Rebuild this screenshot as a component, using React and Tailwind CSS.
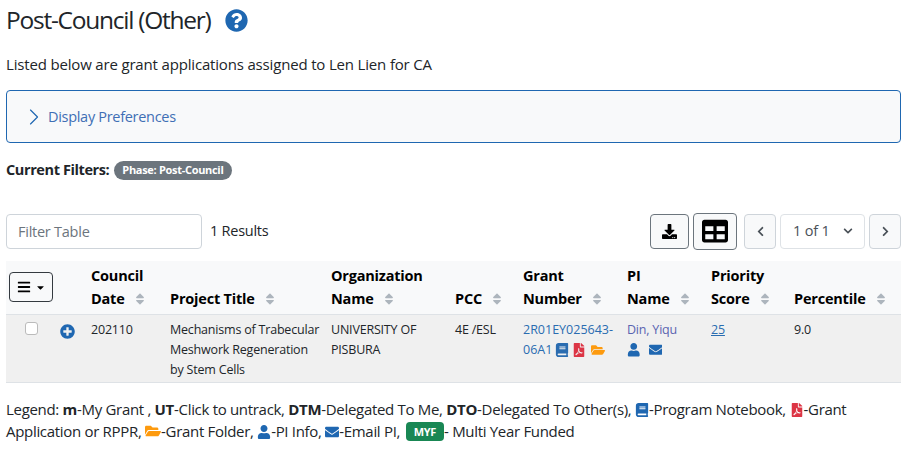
import React from 'react';
import { ChevronRight } from 'lucide-react';
import {
  FaQuestionCircle, FaPlusCircle, FaBook, FaFilePdf, FaFolderOpen, FaUser, FaEnvelope,
  FaSort, FaBars, FaCaretDown, FaChevronLeft, FaChevronRight, FaChevronDown, FaDownload, FaTable,
} from 'react-icons/fa';

function Head({ top, label, className = '' }) {
  return (
    <th className={`px-0 pt-[3px] pb-[4px] align-bottom text-left text-[14.5px] leading-[23px] font-bold text-black ${className}`}>
      {top && <div>{top}</div>}
      <div className="flex items-center">
        {label}
        <FaSort className="ml-[8px] text-[14px] text-[#adb5bd]" />
      </div>
    </th>
  );
}

export default function App() {
  return (
    <div className="min-h-screen bg-white px-[6px] font-['Open_Sans',sans-serif] text-[14.5px] text-[#212529]">
      <div className="flex h-[40px] items-center">
        <h1 className="text-[24.5px] leading-[40px] font-normal tracking-[-1.25px]">Post-Council (Other)</h1>
        <FaQuestionCircle className="ml-[14px] text-[23px] text-[#1f67b1]" />
      </div>

      <p className="mt-[13px] text-[15px] leading-[22px] tracking-[-0.17px]">Listed below are grant applications assigned to Len Lien for CA</p>

      <div className="mt-[15px] flex h-[53px] items-center rounded-[4px] border border-[#1f67b1] bg-[#f8f9fa] pl-[13px]">
        <ChevronRight className="h-[28px] w-[28px] text-[#1f67b1]" strokeWidth={1} />
        <span className="text-[14.5px] tracking-[-0.3px] text-[#3f6fb5]">Display Preferences</span>
      </div>

      <div className="mt-[17px] flex h-[20px] items-center">
        <span className="text-[14.5px] font-bold tracking-[-0.4px]">Current Filters:</span>
        <span className="ml-[5px] flex h-[19px] items-center rounded-full bg-[#6c757d] px-[8px] text-[11px] font-bold tracking-[-0.3px] text-white">Phase: Post-Council</span>
      </div>

      <div className="mt-[33px] flex h-[36px] items-center">
        <input
          placeholder="Filter Table"
          readOnly
          className="h-[35px] w-[196px] rounded-[4px] border border-[#ced4da] bg-white px-[11px] text-[14.5px] tracking-[-0.25px] placeholder:text-[#6c757d]"
        />
        <span className="ml-[8px] text-[14.5px] tracking-[-0.25px]">1 Results</span>
        <div className="ml-auto flex items-center">
          <button className="flex h-[35px] w-[39px] items-center justify-center rounded-[4px] border border-[#6c757d] bg-[#f8f9fa] text-[15px] text-black"><FaDownload /></button>
          <button className="ml-[4px] flex h-[37px] w-[44px] items-center justify-center rounded-[4px] border border-[#6c757d] bg-[#f8f9fa] text-[26px] text-black"><FaTable /></button>
          <button className="ml-[7px] flex h-[35px] w-[32px] items-center justify-center rounded-[4px] border border-[#ced4da] bg-[#f8f9fa] text-[11px] text-[#495057]"><FaChevronLeft /></button>
          <div className="ml-[4px] flex h-[35px] w-[85px] items-center rounded-[4px] border border-[#dee2e6] bg-white pl-[12px] tracking-[-0.2px] text-[#495057]">
            1 of 1
            <FaChevronDown className="ml-[13px] text-[10px]" />
          </div>
          <button className="ml-[4px] flex h-[35px] w-[32px] items-center justify-center rounded-[4px] border border-[#ced4da] bg-[#f8f9fa] text-[11px] text-[#495057]"><FaChevronRight /></button>
        </div>
      </div>

      <table className="mt-[12px] w-[895px] table-fixed border-collapse tracking-[-0.2px]">
        <colgroup>
          <col className="w-[85px]" />
          <col className="w-[79px]" />
          <col className="w-[161px]" />
          <col className="w-[124px]" />
          <col className="w-[68px]" />
          <col className="w-[104px]" />
          <col className="w-[84px]" />
          <col className="w-[83px]" />
          <col className="w-[107px]" />
        </colgroup>
        <thead>
          <tr className="h-[53px] border-b border-[#dee2e6] bg-[#f8f9fa]">
            <th className="px-0 pl-[3px] pt-[3px] align-top">
              <button className="mt-[8px] flex h-[30px] w-[44px] items-center justify-center gap-[4px] rounded-[4px] border border-[#343a40] text-[14px] text-black">
                <FaBars /><FaCaretDown className="text-[11px]" />
              </button>
            </th>
            <Head top="Council" label="Date" />
            <Head label="Project Title" />
            <Head top="Organization" label="Name" />
            <Head label="PCC" />
            <Head top="Grant" label="Number" />
            <Head top="PI" label="Name" />
            <Head top="Priority" label="Score" />
            <Head label="Percentile" />
          </tr>
        </thead>
        <tbody>
          <tr className="h-[68px] border-b border-[#dee2e6] bg-[#f0f0f0] align-top text-[12.5px] leading-[20px]">
            <td className="pt-[5px]">
              <div className="flex items-start">
                <span className="ml-[19px] mt-[2px] block h-[13px] w-[13px] rounded-[3px] border border-[#bbb] bg-white" />
                <FaPlusCircle className="ml-[22px] mt-[4px] text-[15px] text-[#1f67b1]" />
              </div>
            </td>
            <td className="pt-[5px]">202110</td>
            <td className="pt-[5px]">Mechanisms of Trabecular<br />Meshwork Regeneration<br />by Stem Cells</td>
            <td className="pt-[5px]">UNIVERSITY OF<br />PISBURA</td>
            <td className="pt-[5px]">4E /ESL</td>
            <td className="pt-[5px] tracking-[0px] text-[#2a6cb0]">
              2R01EY025643-<br />
              <span className="inline-flex items-center">
                06A1
                <FaBook className="ml-[3px] text-[14px] text-[#2a6cb0]" />
                <FaFilePdf className="ml-[3px] text-[14px] text-[#dc3545]" />
                <FaFolderOpen className="ml-[5px] text-[14px] text-[#fd9a0e]" />
              </span>
            </td>
            <td className="pt-[5px] text-[#5a64b0]">
              Din, Yiqu
              <div className="mt-[3px] flex items-center">
                <FaUser className="text-[13.5px] text-[#1f67b1]" />
                <FaEnvelope className="ml-[8px] text-[13.5px] text-[#1f67b1]" />
              </div>
            </td>
            <td className="pt-[5px]"><a className="text-[#2a6cb0] underline">25</a></td>
            <td className="pt-[5px]">9.0</td>
          </tr>
        </tbody>
      </table>

      <p className="mt-[15px] text-[15px] leading-[22px] tracking-[-0.31px]">
        Legend: <b>m</b>-My Grant , <b>UT</b>-Click to untrack, <b>DTM</b>-Delegated To Me, <b>DTO</b>-Delegated To Other(s),{' '}
        <FaBook className="inline align-[-2px] text-[14px] text-[#1f67b1]" />-Program Notebook,{' '}
        <FaFilePdf className="inline align-[-2px] text-[14px] text-[#dc3545]" />-Grant Application or RPPR,{' '}
        <FaFolderOpen className="inline align-[-2px] text-[16px] text-[#fd9a0e]" />-Grant Folder,{' '}
        <FaUser className="inline align-[-2px] text-[14px] text-[#1f67b1]" />-PI Info,{' '}
        <FaEnvelope className="inline align-[-2px] text-[14px] text-[#1f67b1]" />-Email PI,{' '}
        <span className="ml-[2px] inline-block h-[19px] rounded-[4px] bg-[#198754] px-[8px] align-[1px] text-[11px] leading-[19px] font-bold text-white">MYF</span>- Multi Year Funded
      </p>
    </div>
  );
}
